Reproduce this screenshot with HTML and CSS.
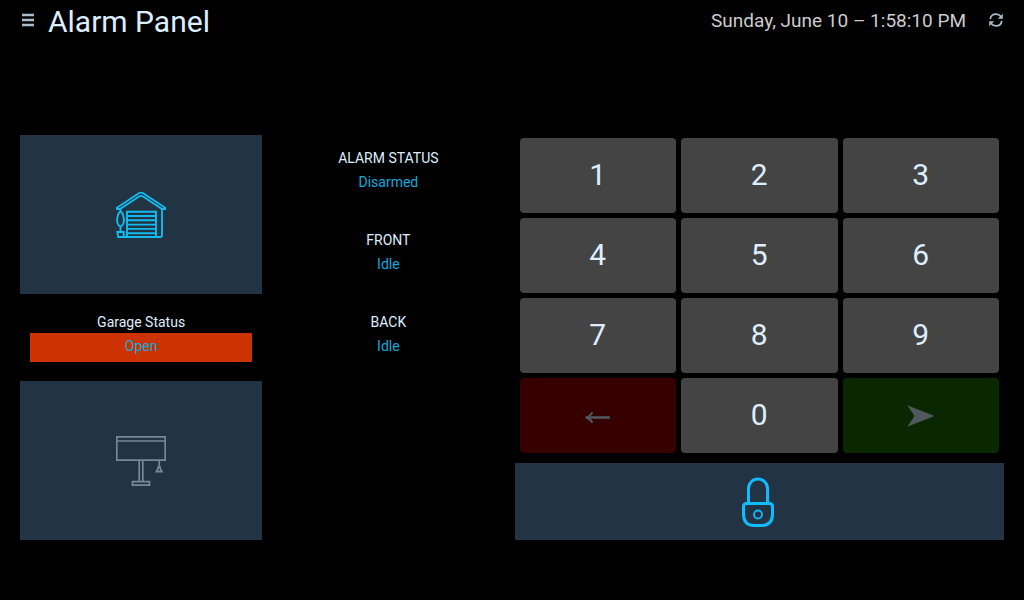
FILE: index.html
```html
<!DOCTYPE html>
<html lang="en">
<head>
<meta charset="utf-8">
<meta name="viewport" content="width=device-width, initial-scale=1">
<title>Alarm Panel</title>
<link rel="stylesheet" href="styles.css">
</head>
<body>
<header class="header">
  <button class="icon-button" type="button" aria-label="Menu">
    <svg width="12" height="14" viewBox="0 0 12 14" fill="currentColor"><path d="M0 .8h12v2.400H0zM0 5.800h12v2.400H0zM0 10.800h12v2.400H0z"/></svg>
  </button>
  <h1 class="title">Alarm Panel</h1>
  <time class="clock">Sunday, June 10 – 1:58:10 PM</time>
  <button class="icon-button" type="button" aria-label="Refresh">
    <svg width="14" height="14" viewBox="0 0 14 14" fill="none" stroke="currentColor" stroke-width="1.700"><path d="M1.200 6C1.700 3 4.200 1.100 7 1.100c2 0 3.600.8 4.900 2.400M12.800 8C12.300 11 9.800 12.900 7 12.900c-2 0-3.600-.8-4.900-2.400"/><path d="M13.800.8v4.900H8.900zM.2 13.200V8.300h4.900z" fill="currentColor" stroke="none"/></svg>
  </button>
</header>
<main class="main">
  <div class="grid">
    <button class="tile garage" type="button" aria-label="Garage door">
      <svg width="50" height="48" viewBox="0 0 50 48" fill="none" stroke="currentColor" stroke-width="1.9">
        <path d="M.8 18v-1.200L22.500 2.500q2.500-1.700 5 0l21.700 14.300V18H46L27 5.500q-2-1.200-4 0L4 18zM46 18v26.500q0 1.500-2 1.500H4M40 46V20.800H11V46M11 25h29M11 29.300h29M11 33.600h29M11 37.900h29M11 42.200h29"/>
        <path d="M4.500 18v2.500C1.800 21.500 1.800 25 1.200 28s1 6.500 3.300 8c2.300-1.500 3.900-5 3.300-8s-.6-6.500-3.300-7.500M4.500 36v5M1.300 41h6.400v5H2.200z"/>
      </svg>
    </button>
    <section class="status garage-status alert">
      <h2 class="label">Garage Status</h2>
      <p class="value">Open</p>
    </section>
    <button class="tile lamp" type="button" aria-label="Table lamp">
      <svg width="50" height="50" viewBox="0 0 50 50" fill="none" stroke="currentColor" stroke-width="1.700">
        <path d="M.8.8h48.400v23.400H.8zM.8 5h48.400M23.200 24.500v21M26.800 24.500v21M16.500 45.700h17v3.500h-17zM43.200 24.500v6M42.200 31h2v1.500l1.800 3.200h-5.600l1.800-3.200z"/>
      </svg>
    </button>
    <section class="status alarm-status">
      <h2 class="label">ALARM STATUS</h2>
      <p class="value">Disarmed</p>
    </section>
    <section class="status front-status">
      <h2 class="label">FRONT</h2>
      <p class="value">Idle</p>
    </section>
    <section class="status back-status">
      <h2 class="label">BACK</h2>
      <p class="value">Idle</p>
    </section>
    <div class="keypad">
      <button class="key" type="button">1</button>
      <button class="key" type="button">2</button>
      <button class="key" type="button">3</button>
      <button class="key" type="button">4</button>
      <button class="key" type="button">5</button>
      <button class="key" type="button">6</button>
      <button class="key" type="button">7</button>
      <button class="key" type="button">8</button>
      <button class="key" type="button">9</button>
      <button class="key erase" type="button" aria-label="Delete" disabled>
        <svg width="26" height="22" viewBox="0 0 26 22" fill="none" stroke="currentColor"><path d="M3 12.500h22" stroke-width="2.600"/><path d="M7.500 7.200Q5.500 11 1.500 12.500q4 1.500 6 5.300" stroke-width="2"/></svg>
      </button>
      <button class="key" type="button">0</button>
      <button class="key enter" type="button" aria-label="Enter" disabled>
        <svg width="28" height="22" viewBox="0 0 28 22" fill="currentColor"><path d="M.3.300L27.500 11 .3 21.700 7.500 11z"/></svg>
      </button>
    </div>
    <button class="tile lock" type="button" aria-label="Lock">
      <svg width="32" height="50" viewBox="0 0 32 50" fill="none" stroke="currentColor" stroke-width="3">
        <path d="M6.500 26V11.500a9.500 9.500 0 0 1 19 0V26M4.500 26.500h23q3 0 3 3V37q0 11.500-11 11.500h-7Q1.500 48.500 1.500 37v-7.500q0-3 3-3z"/>
        <circle cx="16" cy="37.500" r="4" stroke-width="1.800"/>
      </svg>
    </button>
  </div>
</main>
</body>
</html>
```
FILE: styles.css
```css
* {
  box-sizing: border-box;
}

body {
  margin: 0;
  min-height: 100vh;
  display: flex;
  flex-direction: column;
  background: #000;
  color: #def;
  font-family: Roboto, sans-serif;
  font-size: 14px;
}

button {
  display: flex;
  align-items: center;
  justify-content: center;
  margin: 0;
  padding: 0;
  border: 0;
  font: inherit;
  color: inherit;
}

.header {
  display: flex;
  align-items: flex-start;
  padding: 0 20px 31px;
}

.icon-button {
  width: 16px;
  height: 40px;
  background: none;
  color: #abc;
}

.title {
  flex: 1;
  margin: 0 0 0 12px;
  font-size: 30px;
  font-weight: 400;
  line-height: 44px;
}

.clock {
  margin-right: 22px;
  color: #ccc;
  font-size: 19px;
  line-height: 42px;
}

.main {
  flex: 1;
  display: flex;
  align-items: center;
  padding: 0 20px;
}

.grid {
  flex: 1;
  display: grid;
  grid-template-columns: repeat(4, 1fr);
  grid-template-rows: repeat(5, 77px);
  gap: 5px;
}

.tile {
  background: #234;
  color: #1be;
}

.garage {
  grid-area: 1 / 1 / span 2;
}

.garage-status {
  grid-area: 3 / 1;
}

.lamp {
  grid-area: 4 / 1 / span 2;
  color: #789;
}

.alarm-status {
  grid-area: 1 / 2;
}

.front-status {
  grid-area: 2 / 2;
}

.back-status {
  grid-area: 3 / 2;
}

.status {
  padding: 12px 10px 10px;
  text-align: center;
}

.label {
  margin: 0;
  font-size: 14px;
  font-weight: 400;
  line-height: 22px;
}

.value {
  margin: 0;
  padding-bottom: 3px;
  color: #1ad;
  line-height: 26px;
}

.alert .value {
  background: #c30;
}

.keypad {
  grid-area: 1 / 3 / span 4 / span 2;
  display: grid;
  grid-template-columns: repeat(3, 1fr);
  grid-template-rows: repeat(4, 1fr);
  gap: 5px;
  padding: 3px 5px 5px;
}

.key {
  padding-bottom: 2px;
  border-radius: 4px;
  background: #444;
  font-size: 30px;
}

.erase {
  padding: 0;
  background: #360000;
  color: #4f565d;
}

.enter {
  padding: 0;
  background: #0a2800;
  color: #53575f;
}

.lock {
  grid-area: 5 / 3 / auto / span 2;
  padding-right: 2px;
  color: #1bf;
}
```
